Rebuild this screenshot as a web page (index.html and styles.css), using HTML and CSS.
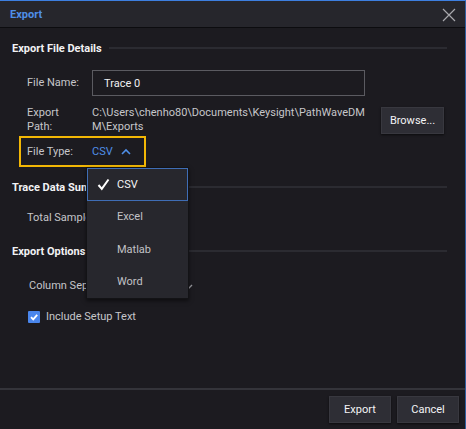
FILE: index.html
```html
<!DOCTYPE html>
<html>
<head>
<meta charset="utf-8">
<link rel="stylesheet" href="styles.css">
</head>
<body>
<div class="dialog">
  <div class="titlebar">
    <span class="title">Export</span>
    <svg class="close" width="14" height="14" viewBox="0 0 14 14"><path d="M1 1 L13 13 M13 1 L1 13" stroke="#a8a8ad" stroke-width="1.2" fill="none"/></svg>
  </div>
  <div class="content">
    <div class="section-head">Export File Details</div>
    <div class="field name-row">
      <span class="label">File Name:</span>
      <div class="input">Trace 0</div>
    </div>
    <div class="field path-row">
      <span class="label">Export<br>Path:</span>
      <span class="path">C:\Users\chenho80\Documents\Keysight\PathWaveDM<br>M\Exports</span>
      <button class="btn browse">Browse...</button>
    </div>
    <div class="type-box">
      <span class="label">File Type:</span>
      <span class="type-value">CSV</span>
      <svg class="chev" width="10" height="7" viewBox="0 0 10 7"><path d="M1 6 L5 2 L9 6" stroke="#4f8fe8" stroke-width="1.6" fill="none"/></svg>
    </div>
    <div class="section-head head2">Trace Data Summary</div>
    <div class="field samples-row"><span class="label nowrap">Total Samples:</span></div>
    <div class="section-head head3">Export Options</div>
    <div class="field col-row">
      <span class="label wide">Column Separator:</span>
      <svg class="chev-down" width="8" height="6" viewBox="0 0 8 6"><path d="M1 2 L4 5 L7 2" stroke="#9a9aa0" stroke-width="1.4" fill="none"/></svg>
    </div>
    <div class="check-row">
      <span class="checkbox"><svg width="12" height="12" viewBox="0 0 12 12"><path d="M3 6.2 L5.2 8.4 L9.2 3.8" stroke="#fff" stroke-width="1.8" fill="none"/></svg></span>
      <span class="check-label">Include Setup Text</span>
    </div>

    <div class="dropdown">
      <div class="item selected">
        <svg class="tick" width="13" height="13" viewBox="0 0 13 13"><path d="M1.5 7 L4.8 10.8 L11.5 1.5" stroke="#fff" stroke-width="2" fill="none"/></svg>
        <span>CSV</span>
      </div>
      <div class="item"><span>Excel</span></div>
      <div class="item"><span>Matlab</span></div>
      <div class="item"><span>Word</span></div>
    </div>
  </div>
  <div class="footer">
    <button class="btn">Export</button>
    <button class="btn">Cancel</button>
  </div>
</div>
</body>
</html>
```
FILE: styles.css
```css
html, body {
  margin: 0;
  padding: 0;
  background: #1c1b20;
}
body {
  font-family: Roboto, "Liberation Sans", sans-serif;
  font-size: 11px;
  color: #c6c6ca;
}
.dialog {
  width: 466px;
  height: 429px;
  box-sizing: border-box;
  border-top: 1px solid #3d7fe0;
  border-right: 1px solid #2f5f9f;
  display: flex;
  flex-direction: column;
  background: #1c1b20;
}
.titlebar {
  height: 26px;
  background: #26262c;
  border-bottom: 1px solid #0c0c0f;
  display: flex;
  align-items: center;
  justify-content: space-between;
  padding: 0 9px 0 10px;
  flex: none;
}
.title {
  color: #4f8fe8;
  font-weight: 700;
  font-size: 11px;
}
.close {
  margin-top: 1px;
}
.content {
  position: relative;
  flex: 1;
  padding: 13px 18px 0 12px;
}
.section-head {
  display: flex;
  align-items: center;
  height: 14px;
  font-weight: 700;
  color: #f2f2f4;
  font-size: 11px;
}
.section-head::after {
  content: "";
  flex: 1;
  height: 2px;
  margin-left: 7px;
  background: #2b2b31;
}
.field {
  display: flex;
  align-items: center;
  padding-left: 15px;
}
.label {
  width: 65px;
  flex: none;
  line-height: 14px;
}
.label.nowrap {
  white-space: nowrap;
}
.label.wide {
  width: auto;
  padding-left: 2px;
  white-space: nowrap;
}
.name-row {
  margin-top: 15px;
}
.input {
  width: 260px;
  height: 24px;
  border: 1px solid #5b5b61;
  padding-left: 11px;
  display: flex;
  align-items: center;
  color: #f0f0f2;
}
.path-row {
  margin-top: 10px;
  align-items: flex-start;
}
.path {
  width: 280px;
  white-space: nowrap;
  line-height: 14px;
}
.btn {
  font-family: Roboto, "Liberation Sans", sans-serif;
  font-size: 11px;
  color: #f4f4f6;
  background: #2e2e35;
  border: 1px solid #38383f;
  box-shadow: 0 1px 2px rgba(0,0,0,0.6);
  height: 27px;
  padding: 0;
  width: 63px;
}
.browse {
  margin-left: auto;
  margin-right: 3px;
  margin-top: 1px;
}
.type-box {
  margin-top: 2px;
  margin-left: 7px;
  width: 117px;
  height: 27px;
  border: 2px solid #f2b705;
  display: flex;
  align-items: center;
  padding-left: 6px;
}
.type-value {
  color: #4f8fe8;
}
.chev {
  margin-left: 8px;
  margin-top: -1px;
}
.head2 {
  margin-top: 13px;
}
.samples-row {
  margin-top: 17px;
}
.head3 {
  margin-top: 19px;
}
.col-row {
  margin-top: 21px;
}
.chev-down {
  margin-left: 65px;
}
.check-row {
  margin-top: 17px;
  margin-left: 16px;
  display: flex;
  align-items: center;
}
.checkbox {
  width: 12px;
  height: 12px;
  background: #4a86ec;
  border-radius: 1px;
  display: flex;
}
.check-label {
  margin-left: 6px;
}
.dropdown {
  position: absolute;
  left: 86px;
  top: 139px;
  width: 101px;
  background: #27272d;
  border: 1px solid #131316;
  box-shadow: 0 2px 4px rgba(0,0,0,0.5);
}
.item {
  height: 32.5px;
  box-sizing: border-box;
  display: flex;
  align-items: center;
  padding-left: 30px;
  position: relative;
  color: #c2c2c6;
}
.item.selected {
  border: 1px solid #3f6db5;
  color: #f4f4f6;
  padding-left: 29px;
}
.tick {
  position: absolute;
  left: 9px;
  top: 9px;
}
.footer {
  flex: none;
  border-top: 2px solid #34343a;
  display: flex;
  justify-content: flex-end;
  align-items: flex-start;
  padding: 6px 6px 0 0;
  gap: 6px;
  box-sizing: border-box;
  height: 41px;
}
.footer .btn {
  width: 62px;
}
```
